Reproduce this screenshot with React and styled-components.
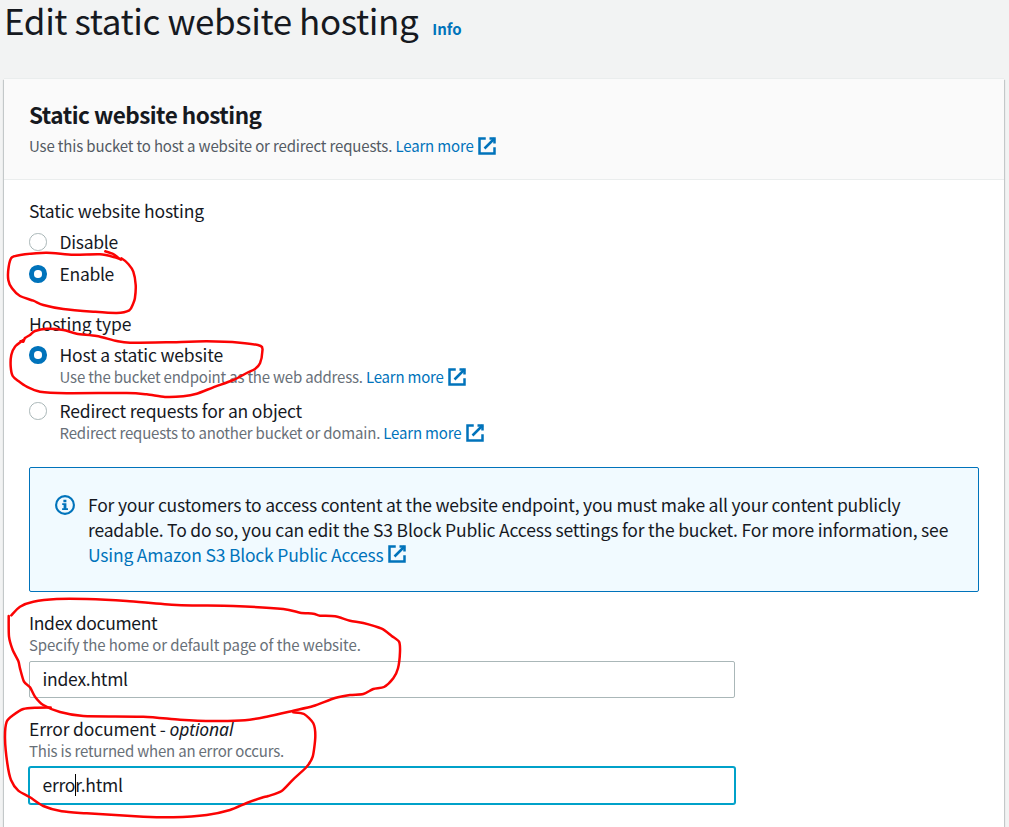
import React from "react";
import styled, { createGlobalStyle } from "styled-components";

const GlobalStyle = createGlobalStyle`
  *, *::before, *::after { box-sizing: border-box; }
  html, body { margin: 0; height: 827px; overflow: hidden; background: #f2f3f3; }
  body { font-family: "Noto Sans CJK SC", "Noto Sans", sans-serif; color: #16191f; }
`;

const Page = styled.div`
  position: relative;
  display: flex;
  flex-direction: column;
  width: 1009px;
  height: 827px;
  padding: 0 5px 0 4px;
`;

const PageHeader = styled.header`
  display: flex;
  align-items: baseline;
  gap: 14px;
  height: 79px;
  flex: none;
`;

const Title = styled.h1`
  margin: 0;
  font-size: 35px;
  line-height: 40px;
  font-weight: 400;
  letter-spacing: -0.4px;
  white-space: nowrap;
`;

const InfoLink = styled.a`
  font-size: 15px;
  line-height: 20px;
  font-weight: 700;
  color: #0073bb;
`;

const Card = styled.section`
  display: flex;
  flex-direction: column;
  flex: 1;
  background: #fff;
  box-shadow: 0 1px 1px 0 rgba(0, 28, 36, 0.3), 1px 1px 1px 0 rgba(0, 28, 36, 0.15),
    -1px 1px 1px 0 rgba(0, 28, 36, 0.15), 0 -1px 0 0 #eaeded;
`;

const CardHeader = styled.div`
  display: flex;
  flex-direction: column;
  gap: 8px;
  flex: none;
  height: 101px;
  padding: 20px 25px 0;
  background: #fafafa;
  border-bottom: 1px solid #eaeded;
`;

const CardTitle = styled.h2`
  margin: 0;
  height: 28px;
  font-size: 22.5px;
  line-height: 30px;
  font-weight: 700;
  letter-spacing: -0.5px;
`;

const CardBody = styled.div`
  display: flex;
  flex-direction: column;
  padding: 17px 25px 0;
`;

const Label = styled.div`
  height: 25px;
  font-size: 17.5px;
  line-height: 27px;
  letter-spacing: ${(p) => p.$track ?? -0.16}px;
  white-space: nowrap;
`;

const Optional = styled.i`
  font-family: "Noto Sans", sans-serif;
  line-height: 1;
  letter-spacing: -0.1px;
`;

const Hint = styled.div`
  display: flex;
  align-items: flex-start;
  height: 20px;
  font-size: 15px;
  line-height: 22px;
  letter-spacing: ${(p) => p.$track ?? -0.2}px;
  white-space: pre;
  color: ${(p) => (p.$dark ? "#545b64" : "#687078")};
`;

const Link = styled.a`
  color: #0073bb;
`;

const RadioGroup = styled.div`
  display: flex;
  flex-direction: column;
  gap: ${(p) => p.$gap}px;
  padding-top: 6px;
  margin-bottom: 25px;
`;

const RadioRow = styled.div`
  display: flex;
  gap: 13px;
`;

const RadioDot = styled.span`
  flex: none;
  width: 17.5px;
  height: 17.5px;
  margin-top: 5px;
  border-radius: 50%;
  background: #fff;
  border: ${(p) => (p.$checked ? "5.5px solid #0073bb" : "1px solid #aab7b8")};
`;

const RadioText = styled.div`
  display: flex;
  flex-direction: column;
`;

const Alert = styled.div`
  display: flex;
  gap: 13px;
  height: 125px;
  padding: 23px 25px;
  background: #f1faff;
  border: 1px solid #0073bb;
  border-radius: 2px;
`;

const AlertText = styled.div`
  display: flex;
  flex-direction: column;
`;

const AlertLine = styled.div`
  display: flex;
  align-items: flex-start;
  height: 25px;
  font-size: 17.5px;
  line-height: 27px;
  letter-spacing: ${(p) => p.$track}px;
  white-space: nowrap;
`;

const Field = styled.div`
  display: flex;
  flex-direction: column;
  padding-top: 17px;
`;

const TextInput = styled.div`
  display: flex;
  align-items: center;
  width: 706px;
  height: 37px;
  margin-top: 7px;
  padding: 0 12px 2px 12.5px;
  background: #fff;
  border: 1px solid ${(p) => (p.$focused ? "#00a1c9" : "#aab7b8")};
  border-radius: 2px;
  box-shadow: ${(p) => (p.$focused ? "0 0 0 1px #00a1c9" : "none")};
  font-size: 17.5px;
  line-height: 25px;
  letter-spacing: -0.24px;
`;

const Caret = styled.span`
  width: 1px;
  height: 22px;
  margin-right: -1px;
  background: #000;
`;

const ExternalSvg = styled.svg`
  flex: none;
  width: 20px;
  height: 20px;
  margin-top: ${(p) => p.$top}px;
  margin-left: 3.4px;
  fill: none;
  stroke: #0073bb;
  stroke-width: 2;
`;

const InfoSvg = styled.svg`
  flex: none;
  width: 20px;
  height: 20px;
  margin-top: 4px;
`;

const InkLayer = styled.svg`
  position: absolute;
  inset: 0;
  width: 1009px;
  height: 827px;
  pointer-events: none;
  fill: none;
  stroke: #fb0303;
  stroke-width: 2.5;
  stroke-linecap: round;
  stroke-linejoin: round;
`;

const External = ({ top = 1 }) => (
  <ExternalSvg viewBox="0 0 16 16" $top={top}>
    <path d="M10 2h4v4" />
    <path d="M6 10l8-8" />
    <path d="M14 9.05V14H2V2h5" />
  </ExternalSvg>
);

const InfoIcon = () => (
  <InfoSvg viewBox="0 0 20 20">
    <circle cx="10" cy="10" r="8.9" fill="none" stroke="#0073bb" strokeWidth="2.1" />
    <path d="M8.4 4.8h3v2.4h-3zM7.2 8.3h4.2v5h1.6v1.7H7.1v-1.7h1.5V10H7.2z" fill="#0073bb" />
  </InfoSvg>
);

const Radio = ({ checked, label, track, children }) => (
  <RadioRow>
    <RadioDot $checked={checked} />
    <RadioText>
      <Label $track={track}>{label}</Label>
      {children}
    </RadioText>
  </RadioRow>
);

const strokes = [
  [[105.3,251.3],[113.3,254],[120.5,259.5],[121.7,258.5],[128.3,264],[133.3,271.7],[135.7,285],[134.9,298.3],[133,304],[129.3,310.3],[116.7,313],[93.3,311.7],[63.3,309],[43.3,305],[33.3,300.7],[20,296],[12,288.3],[8.3,280],[8.7,266.7],[12,257.3],[25,254.3],[46.7,252.7],[73.3,254.7],[100,254.3],[115,257.3],[121,259.5]],
  [[20.5,341.2],[23.3,341.7],[25,338],[30,335],[35,331],[46.7,328.7],[63.3,330],[76.7,333.7],[96.7,336],[116.7,341],[130,342.7],[166.7,342.3],[206.7,341.3],[240,342.7],[260.7,346],[262.3,351.7],[260,363.3],[255,369],[246.7,373],[233.3,380],[213.3,387.3],[196.7,393.7],[183.3,396.3],[165,397],[146.7,394.3],[126.7,393],[66.7,393.2],[40,391.7],[26.7,386.7],[18.3,381],[12.7,376],[10.7,366.7],[11.3,355],[15,346.7],[23.3,340]],
  [[11.3,615.3],[20,606.7],[33.3,601.7],[56.7,599],[86.7,599],[126.7,601],[176.7,605],[233.3,606],[283.3,609],[300,612.7],[313.3,613.7],[320,615.7],[335,616.3],[350,620.7],[363.3,623],[381.7,628.7],[391.7,636],[399,641.7],[400,651.7],[398,668.3],[393.3,678.3],[384,687],[373.3,689],[363.3,694],[350,695],[335,698],[313.3,706],[293.3,710.7],[266.7,716.7],[245,720.3],[213.3,721],[180,719.7],[143.3,716.7],[83.3,716],[60,712],[43.3,705],[35,696.7],[30,687.3],[24,681.7],[20,668.3],[18.3,661],[12.7,650],[9,636.7],[8.7,616]],
  [[50.7,707.5],[36.7,707.7],[23.3,709],[13.3,715],[6.7,721.7],[5,738.3],[7.3,763.3],[11,780],[18.3,790.7],[30,797.3],[43.3,806],[61.7,811.3],[86.7,813.3],[143.3,816.7],[173.3,817.3],[206.7,815],[230,810],[246.7,803],[261.7,797.7],[268.3,796],[281.7,791],[293.3,779.3],[306.7,766.7],[312.7,756.7],[315.3,736.7],[313.3,723.3],[304,714],[293.3,712.3]],
];

/* Runs a smooth curve through the sampled pen points. */
const inkPath = (pts) => {
  let d = `M${pts[0]}`;
  for (let i = 0; i < pts.length - 1; i++) {
    const a = pts[i - 1] || pts[i];
    const b = pts[i];
    const c = pts[i + 1];
    const e = pts[i + 2] || c;
    d += `C${b[0] + (c[0] - a[0]) / 8} ${b[1] + (c[1] - a[1]) / 8} ${c[0] - (e[0] - b[0]) / 8} ${c[1] - (e[1] - b[1]) / 8} ${c}`;
  }
  return d;
};

export default function App() {
  return (
    <Page>
      <GlobalStyle />
      <PageHeader>
        <Title>Edit static website hosting</Title>
        <InfoLink>Info</InfoLink>
      </PageHeader>
      <Card>
        <CardHeader>
          <CardTitle>Static website hosting</CardTitle>
          <Hint $dark $track={-0.15}>
            Use this bucket to host a website or redirect requests. <Link>Learn more</Link>
            <External />
          </Hint>
        </CardHeader>
        <CardBody>
          <Label>Static website hosting</Label>
          <RadioGroup $gap={7}>
            <Radio label="Disable" track={-0.3} />
            <Radio checked label="Enable" track={-0.3} />
          </RadioGroup>
          <Label $track={-0.08}>Hosting type</Label>
          <RadioGroup $gap={11}>
            <Radio checked label="Host a static website" track={-0.16}>
              <Hint>
                Use the bucket endpoint as the web address. <Link>Learn more</Link>
                <External />
              </Hint>
            </Radio>
            <Radio label="Redirect requests for an object" track={-0.18}>
              <Hint $track={-0.18}>
                Redirect requests to another bucket or domain. <Link>Learn more</Link>
                <External />
              </Hint>
            </Radio>
          </RadioGroup>
          <Alert>
            <InfoIcon />
            <AlertText>
              <AlertLine $track={-0.2}>
                For your customers to access content at the website endpoint, you must make all your content publicly
              </AlertLine>
              <AlertLine $track={-0.172}>
                readable. To do so, you can edit the S3 Block Public Access settings for the bucket. For more information, see
              </AlertLine>
              <AlertLine $track={-0.2}>
                <Link>Using Amazon S3 Block Public Access</Link>
                <External top={3} />
              </AlertLine>
            </AlertText>
          </Alert>
          <Field>
            <Label $track={-0.34}>Index document</Label>
            <Hint $track={-0.08}>Specify the home or default page of the website.</Hint>
            <TextInput>index.html</TextInput>
          </Field>
          <Field>
            <Label>
              Error document - <Optional>optional</Optional>
            </Label>
            <Hint>This is returned when an error occurs.</Hint>
            <TextInput $focused>
              erro
              <Caret />
              r.html
            </TextInput>
          </Field>
        </CardBody>
      </Card>
      <InkLayer viewBox="0 0 1009 827">
        {strokes.map((pts, i) => (
          <path key={i} d={inkPath(pts)} />
        ))}
      </InkLayer>
    </Page>
  );
}
